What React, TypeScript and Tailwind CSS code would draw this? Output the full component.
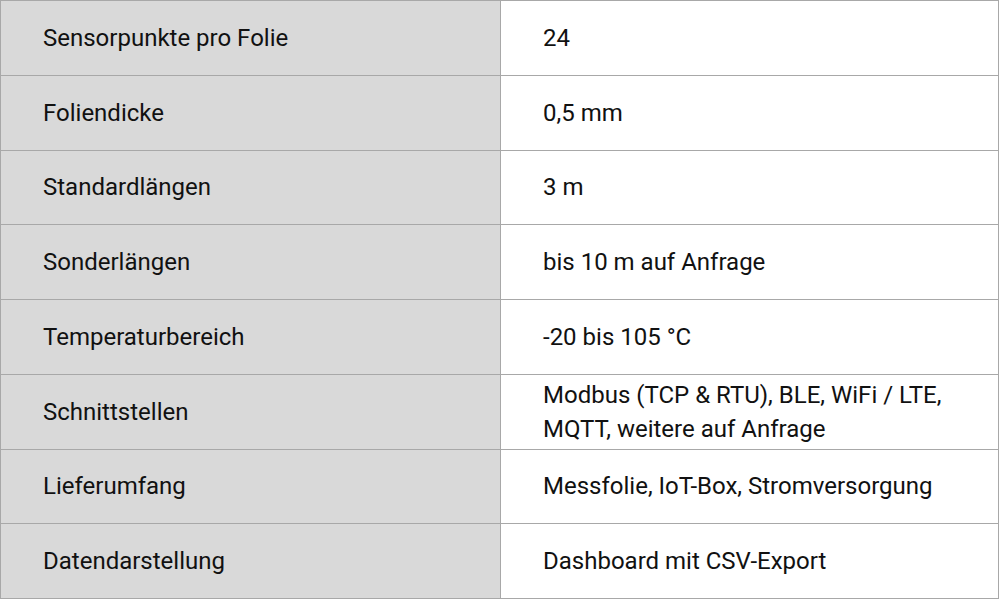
const rows: [string, string][] = [
  ['Sensorpunkte pro Folie', '24'],
  ['Foliendicke', '0,5 mm'],
  ['Standardlängen', '3 m'],
  ['Sonderlängen', 'bis 10 m auf Anfrage'],
  ['Temperaturbereich', '-20 bis 105 °C'],
  ['Schnittstellen', 'Modbus (TCP & RTU), BLE, WiFi / LTE, MQTT, weitere auf Anfrage'],
  ['Lieferumfang', 'Messfolie, IoT-Box, Stromversorgung'],
  ['Datendarstellung', 'Dashboard mit CSV-Export'],
]

export default function App() {
  return (
    <div className="h-[600px] w-[1000px] bg-white font-['Roboto',sans-serif] text-[24px] text-[#111]">
      <table className="w-[999px] table-fixed border-collapse border border-[#a8a8a8]">
        <colgroup>
          <col className="w-[500px]" />
          <col />
        </colgroup>
        <tbody>
          {rows.map(([label, value]) => (
            <tr key={label} className="h-[74.75px]">
              <td className="border border-[#a8a8a8] bg-[#d9d9d9] pl-[42px] pr-4 align-middle leading-[34px]">
                {label}
              </td>
              <td className="border border-[#a8a8a8] bg-white pl-[42px] pr-8 align-middle leading-[34px]">
                {value}
              </td>
            </tr>
          ))}
        </tbody>
      </table>
    </div>
  )
}
